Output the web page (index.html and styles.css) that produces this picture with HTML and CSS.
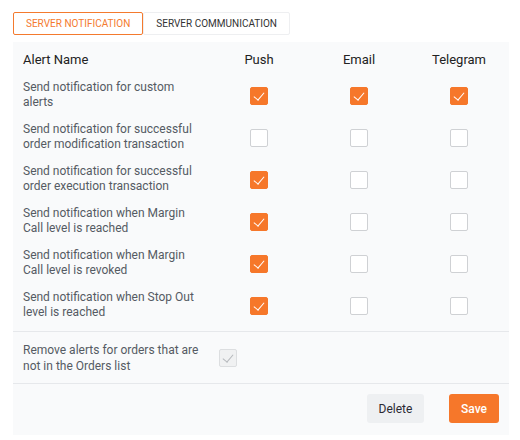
FILE: index.html
```html
<!DOCTYPE html>
<html lang="en">
<head>
  <meta charset="UTF-8" />
  <title>Notification settings</title>
  <link rel="stylesheet" href="styles.css">
</head>
<body>
  <div class="page">
    <div class="tabs">
      <div class="tab active">SERVER NOTIFICATION</div>
      <div class="tab">SERVER COMMUNICATION</div>
    </div>

    <div class="panel">
      <div class="grid">
        <div class="row head">
          <div class="name">Alert Name</div>
          <div class="cell">Push</div>
          <div class="cell">Email</div>
          <div class="cell">Telegram</div>
        </div>

        <div class="row">
          <div class="name">Send notification for custom alerts</div>
          <div class="cell"><span class="box on"></span></div>
          <div class="cell"><span class="box on"></span></div>
          <div class="cell"><span class="box on"></span></div>
        </div>
        <div class="row">
          <div class="name">Send notification for successful order modification transaction</div>
          <div class="cell"><span class="box"></span></div>
          <div class="cell"><span class="box"></span></div>
          <div class="cell"><span class="box"></span></div>
        </div>
        <div class="row">
          <div class="name">Send notification for successful order execution transaction</div>
          <div class="cell"><span class="box on"></span></div>
          <div class="cell"><span class="box"></span></div>
          <div class="cell"><span class="box"></span></div>
        </div>
        <div class="row">
          <div class="name">Send notification when Margin Call level is reached</div>
          <div class="cell"><span class="box on"></span></div>
          <div class="cell"><span class="box"></span></div>
          <div class="cell"><span class="box"></span></div>
        </div>
        <div class="row">
          <div class="name">Send notification when Margin Call level is revoked</div>
          <div class="cell"><span class="box on"></span></div>
          <div class="cell"><span class="box"></span></div>
          <div class="cell"><span class="box"></span></div>
        </div>
        <div class="row">
          <div class="name">Send notification when Stop Out level is reached</div>
          <div class="cell"><span class="box on"></span></div>
          <div class="cell"><span class="box"></span></div>
          <div class="cell"><span class="box"></span></div>
        </div>
      </div>

      <div class="remove-row">
        <div class="remove-text">Remove alerts for orders that are not in the Orders list</div>
        <span class="box disabled"></span>
      </div>

      <div class="actions">
        <button class="btn delete">Delete</button>
        <button class="btn save">Save</button>
      </div>
    </div>
  </div>
</body>
</html>
```

FILE: styles.css
```css
* {
  box-sizing: border-box;
}

body {
  margin: 0;
  font-family: Roboto, 'Liberation Sans', sans-serif;
  background: #fff;
}

.page {
  padding: 12px 11px 0 13px;
}

.tabs {
  display: flex;
  margin-bottom: 7px;
}

.tab {
  height: 23px;
  padding: 0 12px;
  display: flex;
  align-items: center;
  font-size: 10px;
  color: #333;
  border: 1px solid #eeeff1;
  border-radius: 2px;
}

.tab.active {
  color: #f47a2e;
  border-color: #f47a2e;
}

.panel {
  width: 496px;
  background: #f9fafb;
  height: 393px;
}

.grid {
  padding: 0 0 4px 10px;
}

.row {
  display: grid;
  grid-template-columns: 186px 100px 100px 100px;
  align-items: center;
  height: 42px;
}

.row.head {
  height: 33px;
  font-size: 13px;
  color: #222;
  padding-top: 2px;
}

.name {
  font-size: 12px;
  line-height: 15px;
  color: #555b63;
  padding-right: 14px;
  margin-top: -2px;
}

.head .name {
  font-size: 13px;
  color: #222;
  margin-top: 0;
}

.cell {
  display: flex;
  justify-content: center;
}

.box {
  position: relative;
  display: block;
  width: 18px;
  height: 18px;
  background: #fff;
  border: 1px solid #cfd1d4;
  border-radius: 2px;
}

.box.on {
  background: #f6772a;
  border-color: #f6772a;
}

.box.on::after,
.box.disabled::after {
  content: "";
  position: absolute;
  left: 5px;
  top: 2px;
  width: 5px;
  height: 9px;
  border: solid #fff;
  border-width: 0 1.5px 1.5px 0;
  transform: rotate(40deg);
}

.box.disabled {
  background: #f0f1f2;
  border-color: #dcdee0;
}

.box.disabled::after {
  border-color: #b5b8bc;
}

.remove-row {
  display: flex;
  align-items: center;
  height: 53px;
  padding-left: 10px;
  border-top: 1px solid #e6e8eb;
  border-bottom: 1px solid #e6e8eb;
}

.remove-text {
  width: 196px;
  font-size: 12px;
  line-height: 16px;
  color: #555b63;
  padding-right: 12px;
}

.actions {
  display: flex;
  justify-content: flex-end;
  gap: 25px;
  padding: 10px 10px 0 0;
}

.btn {
  height: 29px;
  border: none;
  border-radius: 3px;
  font-family: Roboto, 'Liberation Sans', sans-serif;
  font-size: 12px;
  cursor: pointer;
}

.btn.delete {
  width: 57px;
  background: #eef0f2;
  color: #2a2a33;
}

.btn.save {
  width: 50px;
  background: #f6772a;
  color: #fff;
  font-weight: 500;
}
```
